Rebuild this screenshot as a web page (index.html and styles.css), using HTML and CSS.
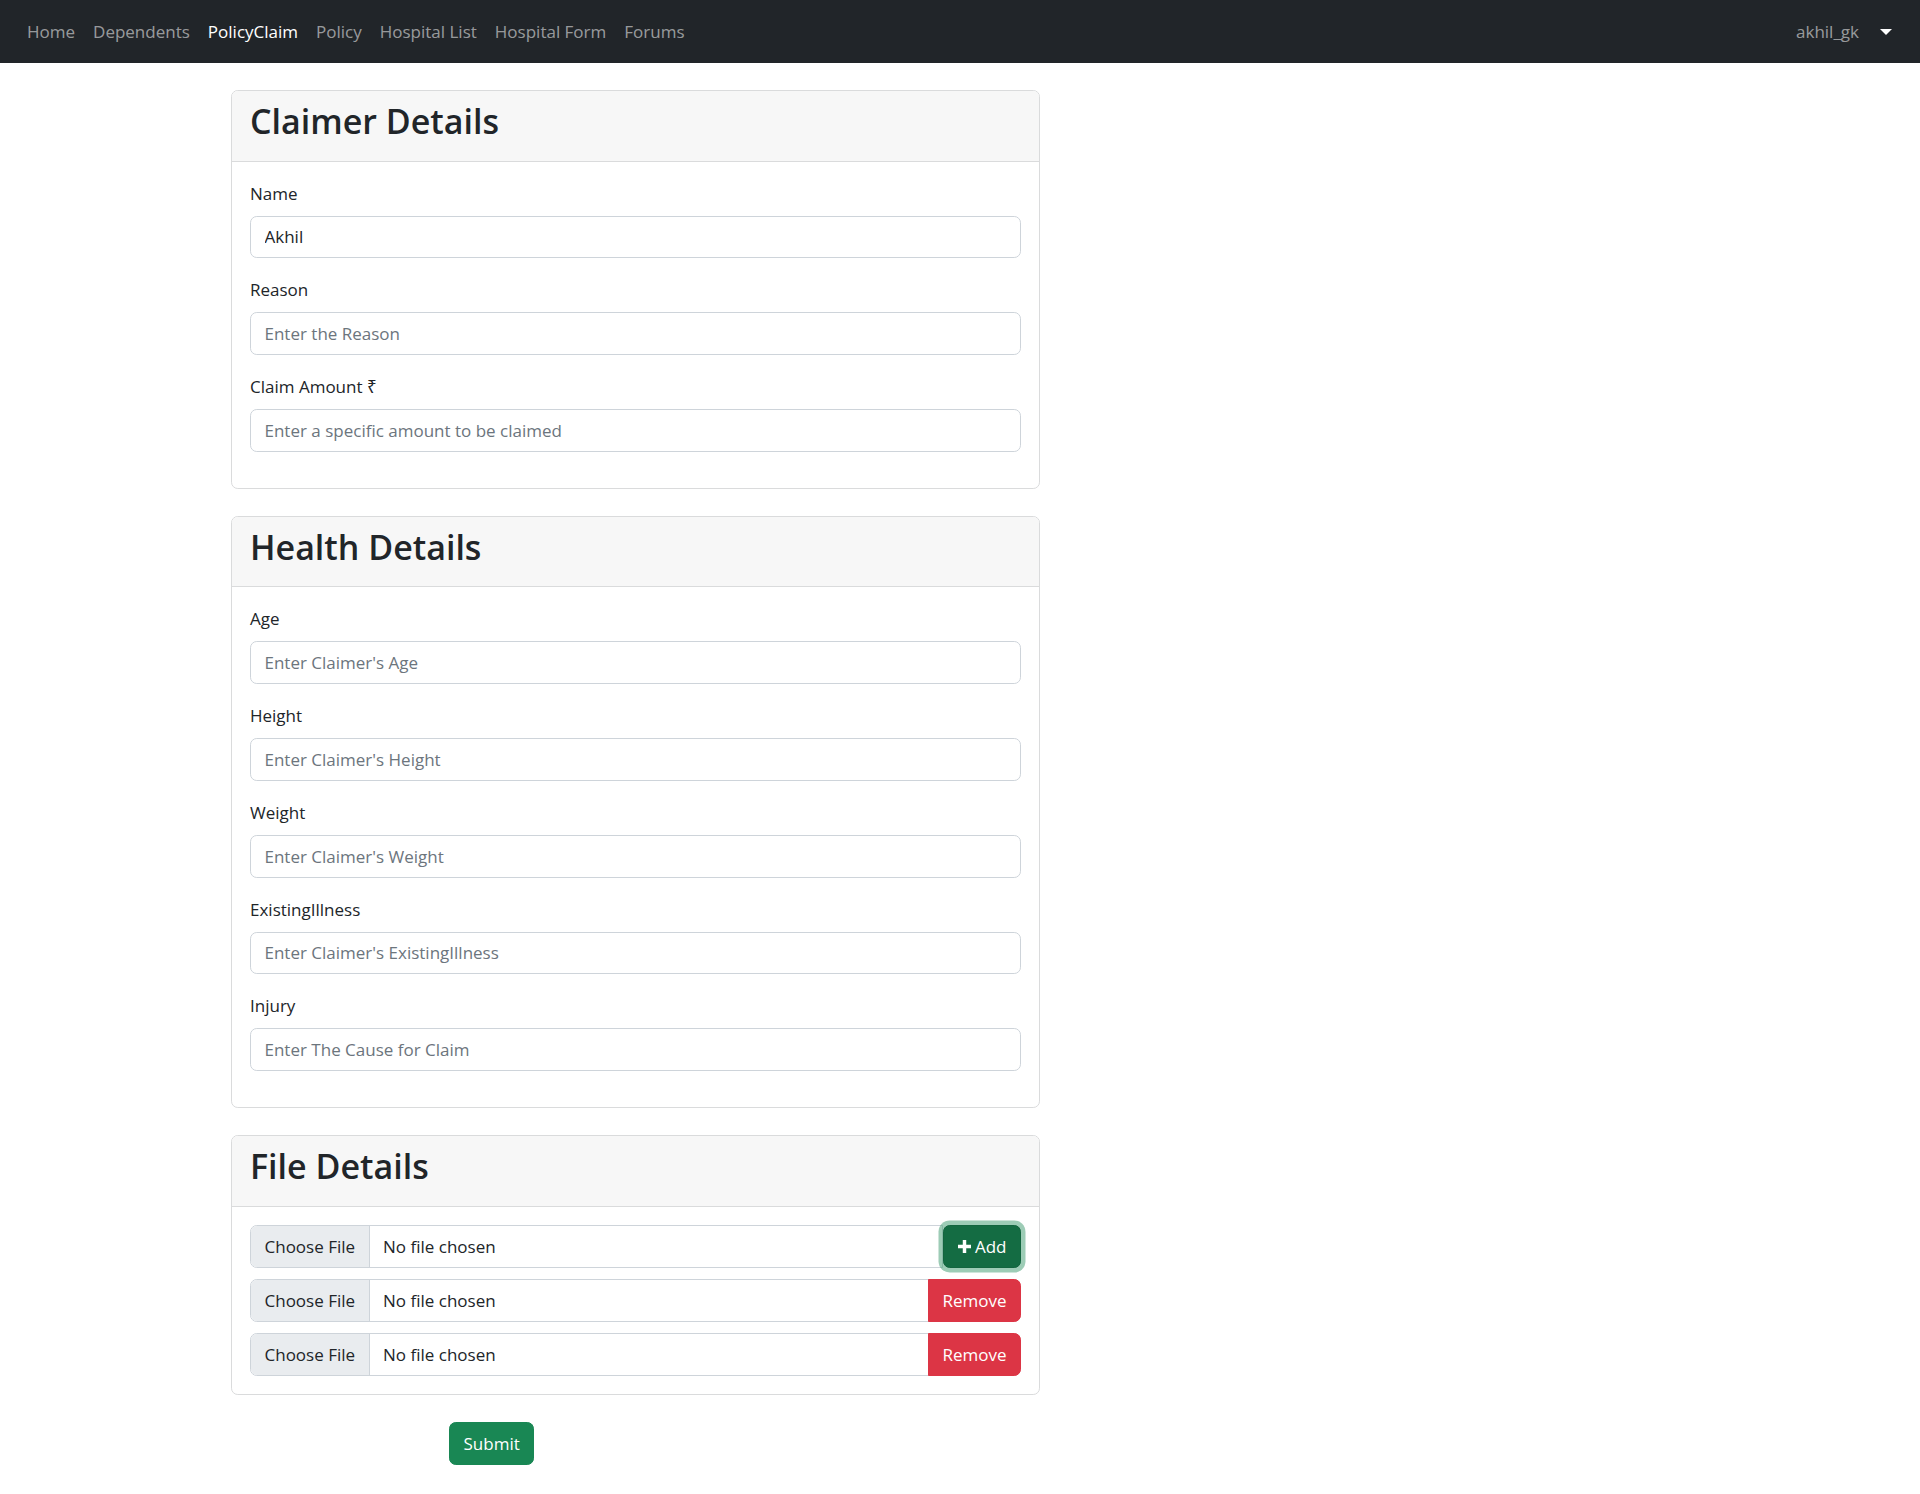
FILE: index.html
```html
<!DOCTYPE html>
<html lang="en">
<head>
<meta charset="utf-8">
<title>PolicyClaim</title>
<link rel="stylesheet" href="styles.css">
</head>
<body>
<nav class="navbar">
  <ul class="nav">
    <li><a class="nav-link" href="#">Home</a></li>
    <li><a class="nav-link" href="#">Dependents</a></li>
    <li><a class="nav-link active" href="#">PolicyClaim</a></li>
    <li><a class="nav-link" href="#">Policy</a></li>
    <li><a class="nav-link" href="#">Hospital List</a></li>
    <li><a class="nav-link" href="#">Hospital Form</a></li>
    <li><a class="nav-link" href="#">Forums</a></li>
  </ul>
  <div class="user">
    <span class="user-name">akhil_gk</span>
    <span class="caret"></span>
  </div>
</nav>

<main class="container">
  <section class="card">
    <div class="card-header"><h2>Claimer Details</h2></div>
    <div class="card-body">
      <div class="field">
        <label class="form-label">Name</label>
        <input class="form-control" type="text" value="Akhil">
      </div>
      <div class="field">
        <label class="form-label">Reason</label>
        <input class="form-control" type="text" placeholder="Enter the Reason">
      </div>
      <div class="field">
        <label class="form-label">Claim Amount ₹</label>
        <input class="form-control" type="text" placeholder="Enter a specific amount to be claimed">
      </div>
    </div>
  </section>

  <section class="card">
    <div class="card-header"><h2>Health Details</h2></div>
    <div class="card-body">
      <div class="field">
        <label class="form-label">Age</label>
        <input class="form-control" type="text" placeholder="Enter Claimer's Age">
      </div>
      <div class="field">
        <label class="form-label">Height</label>
        <input class="form-control" type="text" placeholder="Enter Claimer's Height">
      </div>
      <div class="field">
        <label class="form-label">Weight</label>
        <input class="form-control" type="text" placeholder="Enter Claimer's Weight">
      </div>
      <div class="field">
        <label class="form-label">ExistingIllness</label>
        <input class="form-control" type="text" placeholder="Enter Claimer's ExistingIllness">
      </div>
      <div class="field">
        <label class="form-label">Injury</label>
        <input class="form-control" type="text" placeholder="Enter The Cause for Claim">
      </div>
    </div>
  </section>

  <section class="card">
    <div class="card-header"><h2>File Details</h2></div>
    <div class="card-body file-body">
      <div class="file-row">
        <div class="file-input square-right">
          <span class="file-btn">Choose File</span>
          <span class="file-name">No file chosen</span>
        </div>
        <button class="btn btn-add" type="button">
          <svg class="plus" viewBox="0 0 12 12" width="13" height="13" aria-hidden="true"><path d="M4.4 0h3.2v4.4H12v3.2H7.6V12H4.4V7.6H0V4.4h4.4z" fill="#fff"/></svg>Add
        </button>
      </div>
      <div class="file-row">
        <div class="file-input square-right">
          <span class="file-btn">Choose File</span>
          <span class="file-name">No file chosen</span>
        </div>
        <button class="btn btn-remove" type="button">Remove</button>
      </div>
      <div class="file-row">
        <div class="file-input square-right">
          <span class="file-btn">Choose File</span>
          <span class="file-name">No file chosen</span>
        </div>
        <button class="btn btn-remove" type="button">Remove</button>
      </div>
    </div>
  </section>

  <div class="actions">
    <button class="btn btn-submit" type="submit">Submit</button>
  </div>
</main>
</body>
</html>
```

FILE: styles.css
```css
* { box-sizing: border-box; }

body {
  margin: 0;
  font-family: "Open Sans", "Noto Sans", "DejaVu Sans", sans-serif;
  font-size: 17px;
  line-height: 27px;
  color: #212529;
  background: #fff;
}

.navbar {
  height: 63px;
  background: #212529;
  display: flex;
  align-items: center;
  justify-content: space-between;
  padding: 0 28px 0 18px;
}

.nav {
  list-style: none;
  margin: 0;
  padding: 0;
  display: flex;
}

.nav-link {
  display: block;
  padding: 9px 9px;
  color: rgba(255, 255, 255, 0.55);
  text-decoration: none;
}

.nav-link.active { color: #fff; }

.user {
  display: flex;
  align-items: center;
}

.user-name { color: rgba(255, 255, 255, 0.55); }

.caret {
  margin-left: 21px;
  width: 0;
  height: 0;
  border-top: 6px solid #fff;
  border-left: 6px solid transparent;
  border-right: 6px solid transparent;
}

.container {
  max-width: 1485px;
  margin: 0 auto;
  padding: 0 13.5px 30px;
}

.card {
  width: 809px;
  margin-top: 27px;
  border: 1px solid #dadbdc;
  border-radius: 6.75px;
  background: #fff;
  overflow: hidden;
}

.card-header {
  background: #f7f7f7;
  border-bottom: 1px solid #dadbdc;
  padding: 9px 18px;
}

.card-header h2 {
  margin: 0 0 8.5px;
  font-size: 34px;
  line-height: 43px;
  font-weight: 600;
}

.card-body { padding: 18px; }

.field { margin-bottom: 18px; }

.form-label {
  display: block;
  margin-bottom: 9px;
}

.form-control {
  display: block;
  width: 100%;
  height: 42.75px;
  padding: 6.75px 13.5px;
  font: inherit;
  color: #212529;
  background: #fff;
  border: 1px solid #ced4da;
  border-radius: 6.75px;
  outline: none;
}

.form-control::placeholder { color: #6c757d; opacity: 1; }

.file-body {
  display: flex;
  flex-direction: column;
  gap: 11px;
}

.file-row {
  display: flex;
  align-items: stretch;
  height: 43px;
}

.file-input {
  flex: 1;
  display: flex;
  border: 1px solid #ced4da;
  border-radius: 6.75px;
  overflow: hidden;
}

.file-input.square-right {
  border-top-right-radius: 0;
  border-bottom-right-radius: 0;
}

.file-btn {
  background: #e9ecef;
  border-right: 1px solid #ced4da;
  padding: 7px 13.5px;
  white-space: nowrap;
}

.file-name {
  padding: 7px 13.5px;
  white-space: nowrap;
}

.btn {
  font: inherit;
  color: #fff;
  border: 1px solid transparent;
  padding: 6.75px 13.5px;
  border-radius: 6.75px;
  cursor: pointer;
  display: inline-flex;
  align-items: center;
  white-space: nowrap;
}

.btn-add {
  background: #146c43;
  border-color: #13653f;
  box-shadow: 0 0 0 4.5px rgba(60, 153, 110, 0.5);
  position: relative;
  z-index: 1;
  gap: 4px;
}

.plus { display: block; }

.btn-remove {
  background: #dc3545;
  border-color: #dc3545;
  border-top-left-radius: 0;
  border-bottom-left-radius: 0;
  margin-left: -1px;
}

.actions {
  margin-top: 27px;
  padding-left: 218px;
}

.btn-submit {
  background: #198754;
  border-color: #198754;
  height: 43px;
}
```
